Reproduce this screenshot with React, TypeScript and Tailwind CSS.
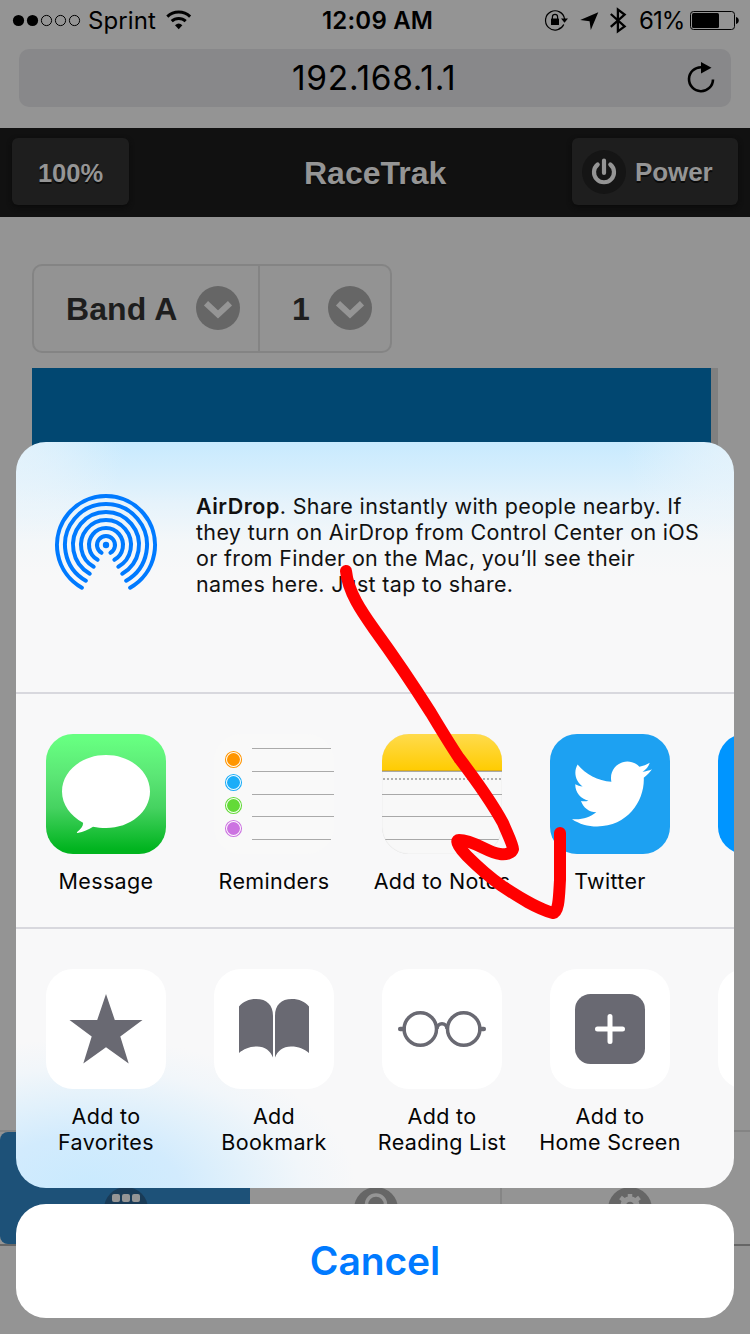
import React from 'react';
import { FaTwitter } from 'react-icons/fa';

const RINGS = [9, 17, 25, 33, 41, 49];

function ringPath(r: number) {
  const a = (29.5 * Math.PI) / 180;
  const dx = r * Math.sin(a);
  const dy = r * Math.cos(a);
  return `M${52 - dx} ${52 + dy}A${r} ${r} 0 1 1 ${52 + dx} ${52 + dy}`;
}

function StatusBar() {
  return (
    <div className="flex h-[41px] items-center text-black">
      <svg className="ml-3 h-[41px] w-[70px] shrink-0" viewBox="12 0 70 41">
        <circle cx="18.5" cy="20.5" r="5.6" />
        <circle cx="32.5" cy="20.5" r="5.6" />
        {[46.5, 60.5, 74.5].map((x) => (
          <circle key={x} cx={x} cy="20.5" r="5.1" fill="none" stroke="#000" strokeWidth="1" />
        ))}
      </svg>
      <span className="ml-[6px] w-[78px] text-[24px] tracking-[0.1px]">Sprint</span>
      <svg className="h-[41px] w-[26px] shrink-0" viewBox="166 0 26 41">
        <path d="M178.7 29.2l-3.7-4a5.6 5.6 0 0 1 7.4 0z" />
        <path d="M171.7 21.2a10.3 10.3 0 0 1 14 0M167.3 16.6a16.7 16.7 0 0 1 22.8 0" fill="none" stroke="#000" strokeWidth="3" />
      </svg>
      <span className="ml-[130px] w-[112px] whitespace-nowrap text-[24px] font-semibold tracking-[0.2px]">12:09 AM</span>
      <svg className="ml-[108px] h-[41px] w-[88px] shrink-0" viewBox="542 0 88 41">
        <path d="M563.8 24.5A9.6 9.6 0 1 1 564.6 19M558.5 28.9A9.6 9.6 0 0 0 563.8 24.5" fill="none" stroke="#000" strokeWidth="1.2" />
        <path d="M561 18.6h7l-3.5 4.2z" />
        <rect x="551" y="18.5" width="8" height="6.5" rx=".6" />
        <path d="M552.4 19v-2.1a2.6 2.6 0 0 1 5.2 0V19" fill="none" stroke="#000" strokeWidth="1.2" />
        <path d="M598.3 12.2L590.8 30l-1.2-8.800-9.400-1.200z" />
        <path d="M610.8 14l13.800 12.300-6.700 5V9.500l6.700 5-13.800 12.300" fill="none" stroke="#000" strokeWidth="2.300" />
      </svg>
      <span className="ml-[9px] w-[50px] text-[24px] tracking-[-0.9px]">61%</span>
      <svg className="h-[41px] w-[52px] shrink-0" viewBox="689 0 52 41">
        <rect x="690.5" y="11.5" width="44" height="18" rx="3" fill="none" stroke="#000" />
        <rect x="692" y="13" width="27" height="15" rx="1.5" />
        <path d="M736 17a3.6 3.6 0 0 1 0 7z" />
      </svg>
    </div>
  );
}

function AddressBar() {
  return (
    <div className="mx-[19px] mt-2 flex h-[58px] items-center rounded-[10px] bg-[#88888a]">
      <span className="ml-[273px] w-[200px] shrink-0 text-[33.5px] leading-[58px] tracking-[0.7px] text-black">192.168.1.1</span>
      <svg className="ml-[192px] h-[34px] w-[34px] shrink-0" viewBox="684 61 34 34">
        <path d="M701.5 67.2A12 12 0 1 0 713 79.4" fill="none" stroke="#000" strokeWidth="2.6" />
        <path d="M701 62l10.5 5.8L701 73.6z" />
      </svg>
    </div>
  );
}

function NavHeader() {
  return (
    <div className="mt-[21px] flex h-[89px] items-start bg-[#111111] pt-[10px] pl-3 font-['Liberation_Sans',Arial,sans-serif] font-bold text-[#959595] [text-shadow:0_2px_0_#0a0a0a]">
      <div className="flex h-[67px] w-[117px] items-center justify-center rounded-md bg-[#1e1e1e] pt-[4px] text-[25.5px] shadow-[0_2px_5px_#0b0b0b]">100%</div>
      <div className="ml-[175px] w-[268px] pt-[2px] text-[32px] leading-[67px]">RaceTrak</div>
      <div className="flex h-[67px] w-[166px] items-center rounded-md bg-[#1e1e1e] pl-[10px] shadow-[0_2px_5px_#0b0b0b]">
        <svg className="h-[44px] w-[44px]" viewBox="0 0 44 44">
          <circle cx="22" cy="22" r="22" fill="#151515" />
          <path d="M15.7 14.5a10 10 0 1 0 12.6 0M22 10.5v12.5" fill="none" stroke="#959595" strokeWidth="4.2" strokeLinecap="round" />
        </svg>
        <span className="ml-[9px] pt-[2px] text-[26px] tracking-[-0.1px]">Power</span>
      </div>
    </div>
  );
}

function ChevronBadge() {
  return (
    <svg className="mb-[2px] h-11 w-11" viewBox="0 0 44 44">
      <circle cx="22" cy="22" r="22" fill="#666666" />
      <path d="M10 17.2L22 28.4 34 17.2" fill="none" stroke="#959595" strokeWidth="6" />
    </svg>
  );
}

function Selectors() {
  return (
    <div className="mt-[47px] ml-8 flex h-[89px] w-[360px] items-center rounded-[10px] border-2 border-[#848484] bg-[#939393] font-['Liberation_Sans',Arial,sans-serif] text-[32px] font-bold text-[#1e1e1e]">
      <div className="flex h-full w-[226px] items-center border-r-2 border-[#848484] pl-[32px]">
        <span className="w-[130px] tracking-[0.1px]">Band A</span>
        <ChevronBadge />
      </div>
      <div className="flex items-center pl-[32px]">
        <span className="w-[36px]">1</span>
        <ChevronBadge />
      </div>
    </div>
  );
}

function TabBar() {
  return (
    <div className="flex h-[116px] border-t-2 border-b-2 border-t-[#848484] border-b-[#666666]">
      <div className="flex h-[112px] w-[250px] justify-center rounded-l-[8px] bg-[#1d5178] pt-[55px]">
        <svg className="ml-[2px] h-[44px] w-[44px]" viewBox="0 0 44 44">
          <circle cx="22" cy="22" r="22" fill="#193b57" />
          {[8, 18, 28].map((x) => (
            <rect key={x} x={x} y="7" width="8" height="8" rx="2" fill="#959595" />
          ))}
        </svg>
      </div>
      <div className="flex w-[252px] justify-center border-r-2 border-[#858585] pt-[55px]">
        <svg className="ml-[2px] h-[44px] w-[44px]" viewBox="0 0 44 44">
          <circle cx="22" cy="22" r="22" fill="#666666" />
          <circle cx="22" cy="17.5" r="9.5" fill="none" stroke="#959595" strokeWidth="3.5" />
        </svg>
      </div>
      <div className="flex flex-1 justify-center pt-[55px]">
        <svg className="ml-[8px] h-[44px] w-[44px]" viewBox="0 0 44 44">
          <circle cx="22" cy="22" r="22" fill="#666666" />
          <circle cx="22" cy="19" r="7" fill="none" stroke="#959595" strokeWidth="5.500" />
          <path d="M22 13V7M27 14l4.500-3.500M17 14l-4.500-3.500" fill="none" stroke="#959595" strokeWidth="4.500" />
        </svg>
      </div>
    </div>
  );
}

function BrowserPage() {
  return (
    <div className="flex h-full flex-col">
      <StatusBar />
      <AddressBar />
      <NavHeader />
      <Selectors />
      <div className="mt-[15px] ml-8 flex h-[762px] shrink-0">
        <div className="h-[300px] w-[679px] bg-[#014771]" />
        <div className="h-[300px] w-[7px] bg-[#808080]" />
      </div>
      <TabBar />
    </div>
  );
}

function MessageIcon() {
  return (
    <div className="h-[120px] w-[120px] rounded-[27px] bg-[linear-gradient(#67ff81_4%,#5be675_35%,#45d260_62%,#01b41f_96%)]">
      <svg viewBox="0 0 120 120">
        <path d="M60 21c24.300 0 44 16.300 44 36.500S84.300 94 60 94c-4.500 0-8.900-.5-13-1.300-4.300 2.600-9.500 5.600-15.500 6.200-1-.1-.8-.9.200-1.500 3.500-2.600 5.800-5.500 5.300-8.700C24.500 82 16 70.500 16 57.500 16 37.300 35.700 21 60 21z" fill="#fff" />
      </svg>
    </div>
  );
}

function RemindersIcon() {
  const colors = ['#ff9500', '#1badf8', '#63da38', '#cc73e1'];
  return (
    <svg className="h-[120px] w-[120px]" viewBox="0 0 120 120">
      <rect width="120" height="120" rx="27" fill="#f9f9f9" />
      {colors.map((c, i) => (
        <g key={c}>
          <circle cx="19.500" cy={25.5 + i * 23} r="8" fill="#fff" stroke={c} strokeWidth="1.100" />
          <circle cx="19.500" cy={25.5 + i * 23} r="6.500" fill={c} />
        </g>
      ))}
      <path d="M38 14.500h79M38 37.500h82M38 60.500h82M38 82.500h82M38 105.500h79" stroke="#aaa" strokeWidth="1" />
    </svg>
  );
}

function NotesIcon() {
  return (
    <div className="h-[120px] w-[120px] overflow-hidden rounded-[27px] bg-[#f8f8f8] shadow-[inset_0_0_1px_#ccc]">
      <div className="h-[37px] border-b border-[#dcae1c] bg-[linear-gradient(#ffdb4d,#ffcc02)]" />
      <svg className="h-[83px] w-[120px]" viewBox="0 37 120 83">
        <path d="M0 37.500h120M0 60.500h120M0 82.500h120M3 105.500h114" stroke="#a8a8a8" />
        <path d="M1 45h118" stroke="#b0b0b0" strokeWidth="2" strokeDasharray="2 2" />
      </svg>
    </div>
  );
}

function TwitterIcon() {
  return (
    <div className="flex h-[120px] w-[120px] items-center justify-center rounded-[27px] bg-[#1da1f2] pl-[3px]">
      <FaTwitter className="h-[80px] w-[80px] text-white" />
    </div>
  );
}

function Tile({ children }: { children?: React.ReactNode }) {
  return (
    <div className="h-[120px] w-[120px] rounded-[27px] bg-white text-[#696972]">
      {children && (
        <svg viewBox="0 0 120 120" fill="currentColor">
          {children}
        </svg>
      )}
    </div>
  );
}

function Item({ icon, lines }: { icon: React.ReactNode; lines: string[] }) {
  return (
    <div className="flex w-[168px] shrink-0 flex-col items-center">
      {icon}
      <div className="mt-[14px] text-center text-[21.5px] leading-[26px] tracking-[0.33px] text-[#050505]">
        {lines.map((l) => (
          <div key={l} className="whitespace-nowrap">{l}</div>
        ))}
      </div>
    </div>
  );
}

function AirDropSection() {
  return (
    <div className="flex h-[252px] border-b-2 border-[#d8d8de]">
      <svg className="mt-[51px] ml-[38px] h-[104px] w-[104px]" viewBox="0 0 104 104">
        <circle cx="52" cy="52" r="3.2" fill="#007aff" />
        {RINGS.map((r) => (
          <path key={r} d={ringPath(r)} fill="none" stroke="#007aff" strokeWidth="4" strokeLinecap="round" />
        ))}
      </svg>
      <div className="mt-[51px] ml-[38px] text-[21.5px] leading-[26px] tracking-[0.33px] whitespace-nowrap text-[#111]">
        <p><span className="font-semibold tracking-[0.5px]">AirDrop</span>. Share instantly with people nearby. If</p>
        <p>they turn on AirDrop from Control Center on iOS</p>
        <p>or from Finder on the Mac, you’ll see their</p>
        <p>names here. Just tap to share.</p>
      </div>
    </div>
  );
}

function ShareSheet() {
  return (
    <div className="h-[746px] overflow-hidden rounded-[30px] bg-[#f8f8f9] bg-[radial-gradient(ellipse_110px_120px_at_0_0,#f3f7fa99_0%,#f3f7fa66_40%,#f3f7fa00_100%),radial-gradient(ellipse_110px_120px_at_100%_0,#f3f7fa99_0%,#f3f7fa66_40%,#f3f7fa00_100%),linear-gradient(#c8eafe_0px,#d5eefd_30px,#e6f3fb_62px,#f4f7f9_100px,#f8f8f900_135px),radial-gradient(ellipse_270px_150px_at_70px_100%,#c9eafe_0%,#d2ebfd_35%,#e2f1fb_58%,#f1f6fa_80%,#f8f8f900_100%)]">
      <AirDropSection />
      <div className="flex h-[235px] border-b-2 border-[#d8d8de] pt-10 pl-[6px]">
        <Item icon={<MessageIcon />} lines={['Message']} />
        <Item icon={<RemindersIcon />} lines={['Reminders']} />
        <Item icon={<NotesIcon />} lines={['Add to Notes']} />
        <Item icon={<TwitterIcon />} lines={['Twitter']} />
        <Item icon={<div className="h-[120px] w-[120px] rounded-[27px] bg-[#0095ff]" />} lines={[]} />
      </div>
      <div className="flex pt-10 pl-[6px]">
        <Item
          icon={<Tile><path d="M60 25l8.800 26H96.500L74.300 67.600 82.700 94.500 60 78.300 37.300 94.500 45.700 67.600 23.500 51h27.700z" /></Tile>}
          lines={['Add to', 'Favorites']}
        />
        <Item
          icon={<Tile><path d="M25 37.500C29 32.500 35 30 42 30c11 0 17 6 17 17v41.500C56.500 82 51 77.500 43 77.500c-8 0-13 2.500-18 6.500zM95 37.500C91 32.500 85 30 78 30c-11 0-17 6-17 17v41.500C63.500 82 69 77.500 77 77.500c8 0 13 2.500 18 6.500z" /></Tile>}
          lines={['Add', 'Bookmark']}
        />
        <Item
          icon={
            <Tile>
              <g fill="none" stroke="currentColor" strokeWidth="3.500">
                <circle cx="38.300" cy="60" r="16.200" />
                <circle cx="81.700" cy="60" r="16.200" />
                <path d="M55 60c0-7 10-7 10 0" />
                <path d="M18.200 60h3.300M98.500 60h3.300" strokeWidth="4.500" strokeLinecap="round" />
              </g>
            </Tile>
          }
          lines={['Add to', 'Reading List']}
        />
        <Item
          icon={
            <Tile>
              <rect x="25" y="25" width="70" height="70" rx="15.500" />
              <path d="M60 47.500v25M47.500 60h25" stroke="#fff" strokeWidth="5" strokeLinecap="round" />
            </Tile>
          }
          lines={['Add to', 'Home Screen']}
        />
        <Item icon={<Tile />} lines={[]} />
      </div>
    </div>
  );
}

export default function App() {
  return (
    <div className="relative h-[1334px] w-[750px] overflow-hidden bg-[#949494] font-[Inter,'Liberation_Sans',sans-serif]">
      <BrowserPage />
      <div className="absolute inset-x-4 top-[442px] flex flex-col gap-4">
        <ShareSheet />
        <button className="h-[114px] rounded-[30px] bg-white text-[39px] font-semibold tracking-[-0.1px] text-[#007aff]">Cancel</button>
      </div>
      <svg className="pointer-events-none absolute inset-0 h-full w-full" viewBox="0 0 750 1334">
        <path
          d="M346 571C348 592 362 612 374 629C390 651 412 683 431 713C440 728 449 743 459 758C475 779 491 801 503 823C508 835 513 845 513 849C512 853 506 855 500 854C488 853 474 840 459 840C454 840 461 850 467 856C480 869 492 879 502 886C520 898 536 908 553 913C559 912 559 896 560 880V833"
          fill="none"
          stroke="#ff0000"
          strokeWidth="12"
          strokeLinecap="round"
          strokeLinejoin="round"
        />
      </svg>
    </div>
  );
}
